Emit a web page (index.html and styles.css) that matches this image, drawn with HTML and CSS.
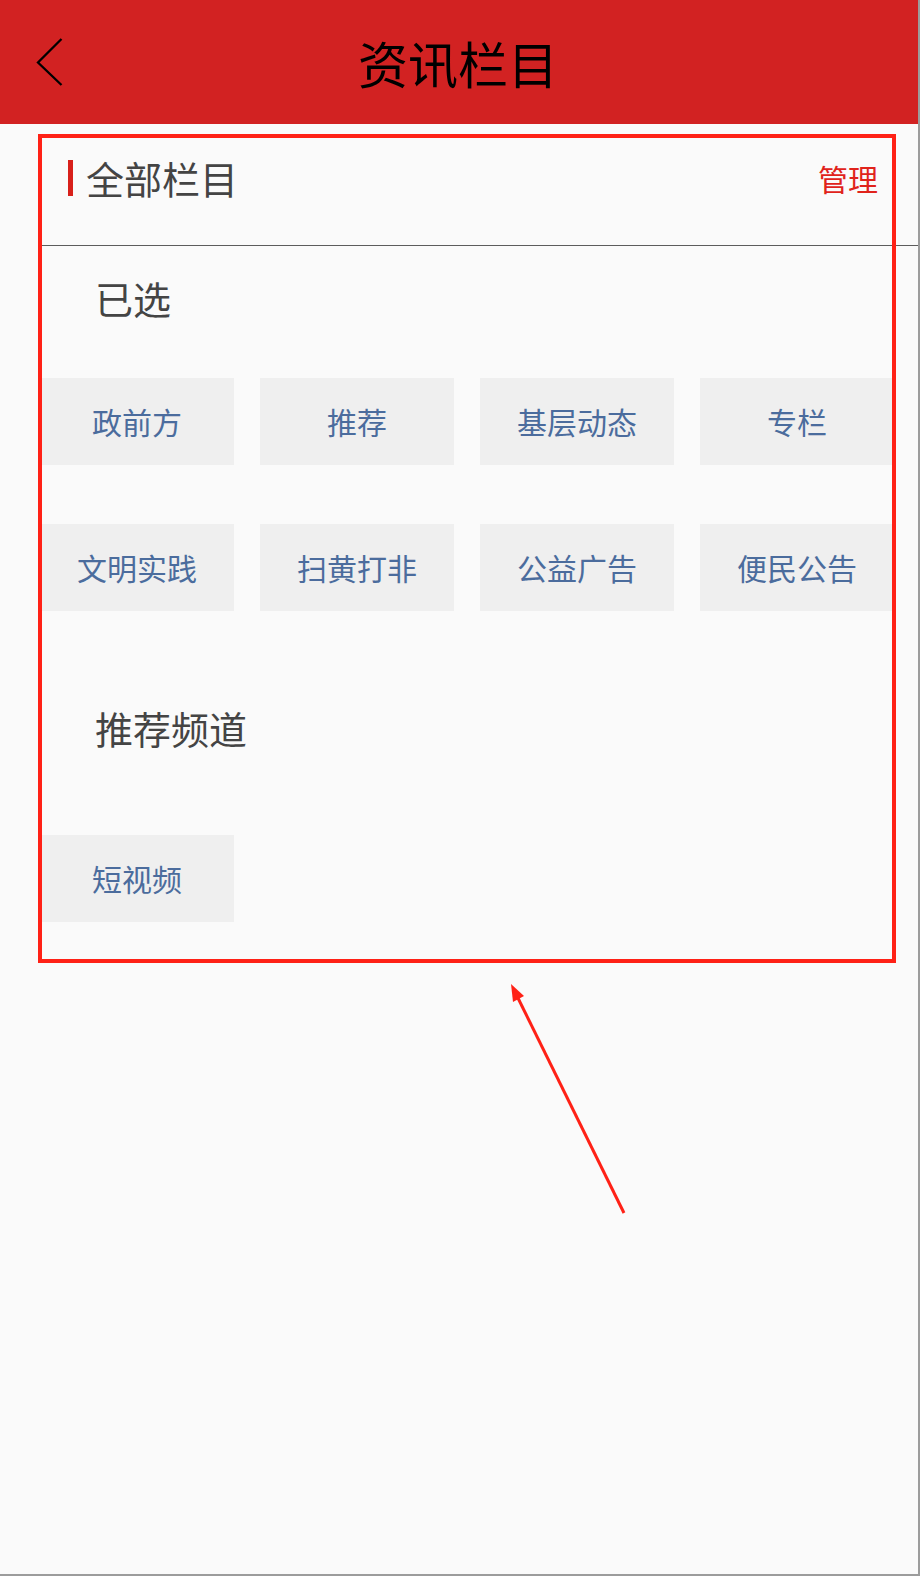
FILE: index.html
```html
<!DOCTYPE html>
<html lang="zh-CN">
<head>
<meta charset="utf-8">
<title>资讯栏目</title>
<link rel="stylesheet" href="styles.css">
</head>
<body>
<div class="page">
  <header class="topbar">
    <div class="back">
      <svg class="back-icon" width="28" height="50" viewBox="0 0 28 50">
        <polyline points="25.5,2 2,25.5 25.5,48" fill="none" stroke="#000" stroke-width="2.3"/>
      </svg>
    </div>
    <h1 class="title">资讯栏目</h1>
    <div class="spacer"></div>
  </header>

  <div class="section-head">
    <span class="bar"></span>
    <span class="head-text">全部栏目</span>
    <span class="manage">管理</span>
  </div>

  <h2 class="group-title first">已选</h2>
  <div class="tags">
    <div class="tag">政前方</div>
    <div class="tag">推荐</div>
    <div class="tag">基层动态</div>
    <div class="tag">专栏</div>
    <div class="tag">文明实践</div>
    <div class="tag">扫黄打非</div>
    <div class="tag">公益广告</div>
    <div class="tag">便民公告</div>
  </div>

  <h2 class="group-title second">推荐频道</h2>
  <div class="tags recommend">
    <div class="tag">短视频</div>
  </div>

  <svg class="annotation" width="918" height="1574" viewBox="0 0 918 1574">
    <rect x="40" y="136" width="854" height="825" fill="none" stroke="#ff2116" stroke-width="4"/>
    <line x1="624" y1="1213" x2="516" y2="994" stroke="#ff2116" stroke-width="3"/>
    <polygon points="511,984 524,996 513,1002" fill="#ff2116"/>
  </svg>
</div>
</body>
</html>
```

FILE: styles.css
```css
html, body {
  margin: 0;
  padding: 0;
  background: #fafafa;
}

body {
  font-family: "Noto Sans CJK SC", "Noto Sans", sans-serif;
}

.page {
  position: relative;
  width: 918px;
  height: 1574px;
  background: #fafafa;
  border-right: 2px solid #9c9c9c;
  border-bottom: 2px solid #9c9c9c;
  overflow: hidden;
}

.topbar {
  height: 124px;
  background: #d22222;
  display: grid;
  grid-template-columns: 110px 1fr 110px;
  align-items: center;
}

.back {
  padding-left: 36px;
  display: flex;
  align-items: center;
  height: 124px;
}

.back-icon {
  display: block;
}

.title {
  margin: 0;
  padding-right: 2px;
  text-align: center;
  font-size: 50px;
  line-height: 50px;
  font-weight: 400;
  color: #000;
}

.section-head {
  margin-left: 40px;
  height: 121px;
  border-bottom: 1px solid #5c5c5c;
  display: flex;
  align-items: flex-start;
  padding: 0 40px 0 28px;
}

.bar {
  width: 5px;
  height: 36px;
  margin-top: 36px;
  background: #d8201a;
}

.head-text {
  margin-left: 13px;
  margin-top: 35px;
  font-size: 38px;
  line-height: 38px;
  color: #444;
}

.manage {
  margin-left: auto;
  margin-top: 39px;
  font-size: 30px;
  line-height: 30px;
  color: #e0231b;
}

.group-title {
  margin: 0;
  padding-left: 95px;
  font-size: 38px;
  line-height: 38px;
  font-weight: 400;
  color: #444;
}

.group-title.first {
  margin-top: 33px;
}

.group-title.second {
  margin-top: 98px;
}

.tags {
  margin-left: 40px;
  margin-top: 61px;
  display: grid;
  grid-template-columns: repeat(4, 194px);
  column-gap: 26px;
  row-gap: 59px;
}

.tags.recommend {
  margin-top: 88px;
}

.tag {
  height: 87px;
  line-height: 87px;
  text-align: center;
  background: #efefef;
  color: #4b6c9d;
  font-size: 30px;
}

.annotation {
  position: absolute;
  left: 0;
  top: 0;
  pointer-events: none;
}
```
